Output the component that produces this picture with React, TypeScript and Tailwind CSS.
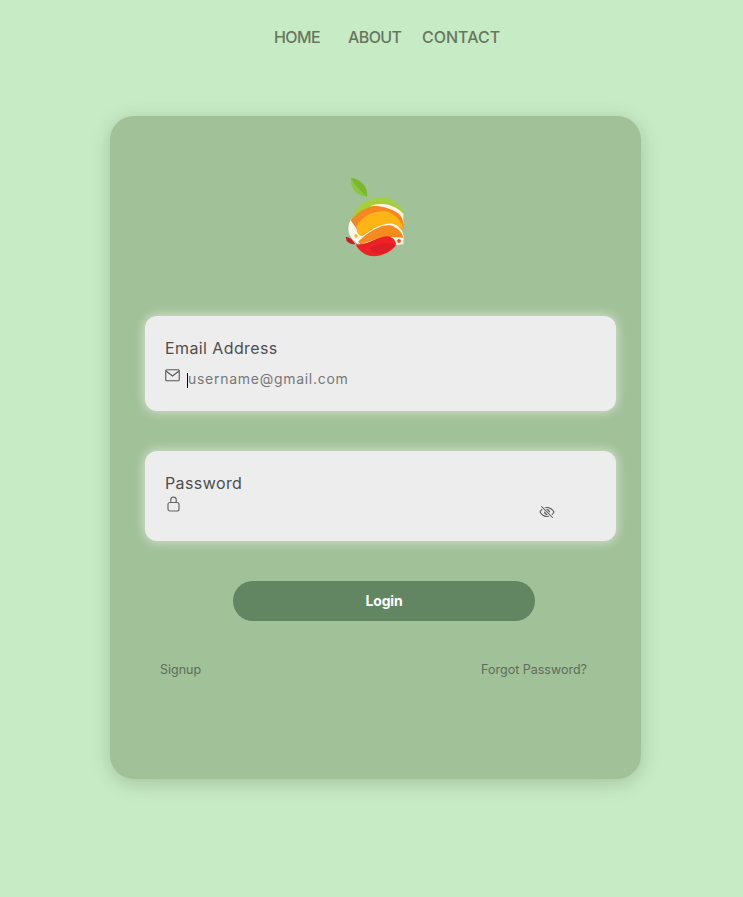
import { IoEyeOffOutline } from "react-icons/io5";

const font = { fontFamily: "Inter, 'Open Sans', sans-serif" };

function Logo() {
  return (
    <svg viewBox="0 0 330 330" className="h-[110px] w-[110px]">
      <path d="M93 50 C125 55 145 80 141 108 C112 104 90 85 93 50 Z" fill="#8cc63f" />
      <path d="M93 50 C125 55 145 80 141 108 C125 90 105 75 93 50 Z" fill="#76b82f" />
      <path d="M97 172 C105 128 160 100 205 112 C225 122 245 140 257 156 L230 150 L150 140 C130 148 110 158 97 172 Z" fill="#a5cf3d" />
      <path d="M92 176 C82 195 82 220 100 238 L112 248 L160 225 L130 170 Z" fill="#fff8ea" />
      <path d="M150 136 C180 122 222 128 250 158 L250 190 L170 150 Z" fill="#fff8ea" />
      <path d="M92 178 C108 158 130 142 160 134 C195 136 225 146 240 162 C250 175 252 190 250 205 L125 225 Z" fill="#f6861f" />
      <path d="M110 196 C125 165 165 146 205 152 C232 165 248 185 250 204 C215 182 170 188 130 222 C118 230 108 215 110 196 Z" fill="#fdb515" />
      <path d="M112 240 C145 208 185 186 218 188 C235 192 248 205 251 225 L250 250 L225 252 L118 250 Z" fill="#fff8ea" />
      <path d="M114 242 C150 208 185 190 212 193 C232 200 247 214 250 230 L215 228 C185 226 150 240 122 250 Z" fill="#f58b1e" />
      <path d="M78 228 C88 226 100 238 106 250 C92 250 76 245 78 228 Z" fill="#c81f2b" />
      <path d="M108 250 C145 254 170 226 205 226 C222 230 232 245 226 256 C205 282 160 296 130 276 C118 268 110 260 108 250 Z" fill="#ec2225" />
      <path d="M150 262 C175 244 205 244 224 252 C205 280 165 290 150 262 Z" fill="#dc1f26" />
      <circle cx="237" cy="240" r="7" fill="#e8541f" stroke="#fff8ea" strokeWidth="2" />
      <circle cx="108" cy="225" r="5" fill="#fdb515" />
    </svg>
  );
}

function MailIcon() {
  return (
    <svg viewBox="0 0 15 13" className="h-[13px] w-[15px]" fill="none" stroke="#555" strokeWidth="1.1">
      <rect x="0.75" y="0.75" width="13.5" height="11" rx="1" />
      <path d="M1 2 L7.5 7 L14 2" />
    </svg>
  );
}

function LockIcon() {
  return (
    <svg viewBox="0 0 13 16" className="h-4 w-[13px]" fill="none" stroke="#666" strokeWidth="1.2">
      <rect x="1" y="6.5" width="11" height="8.5" rx="2" />
      <path d="M3.8 6.5 V3.8 A2.7 2.7 0 0 1 9.2 3.8 V6.5" />
    </svg>
  );
}

export default function App() {
  return (
    <div className="min-h-[897px] bg-[#c7ecc5] pt-[27px]" style={font}>
      <nav className="ml-[274px] flex h-[21px] text-[16px] leading-[21px] font-medium text-[#66775f]">
        <a className="w-[74px] tracking-[-0.6px]">HOME</a>
        <a className="w-[74px] tracking-[-0.6px]">ABOUT</a>
        <a className="tracking-[0px]">CONTACT</a>
      </nav>

      <main className="mt-[68px] ml-[110px] h-[663px] w-[531px] rounded-[24px] bg-[#a1c198] pt-[45px] shadow-[0_4px_20px_rgba(0,0,0,0.18)]">
        <div className="ml-[210px]">
          <Logo />
        </div>

        <div className="mt-[45px] ml-[35px] h-[95px] w-[471px] rounded-[12px] bg-[#ededed] px-5 pt-[20px] shadow-[0_0_12px_rgba(255,255,255,0.65)]">
          <div className="text-[16px] leading-[24px] tracking-[0.4px] text-[#4d4d4d]">Email Address</div>
          <div className="mt-[6px] flex items-start">
            <div className="mt-[3px] w-[22px]">
              <MailIcon />
            </div>
            <span className="mt-[7px] border-l border-black pb-[4px] text-[14px] leading-[11px] tracking-[0.72px] text-[#777]">username@gmail.com</span>
          </div>
        </div>

        <div className="mt-[40px] ml-[35px] h-[90px] w-[471px] rounded-[12px] bg-[#ededed] px-5 pt-[20px] shadow-[0_0_12px_rgba(255,255,255,0.65)]">
          <div className="text-[16px] leading-[24px] tracking-[0.4px] text-[#4d4d4d]">Password</div>
          <div className="flex items-start justify-between pt-px">
            <div className="ml-[2px]">
              <LockIcon />
            </div>
            <IoEyeOffOutline className="mt-[8px] mr-[41px] text-[16px] text-[#555]" />
          </div>
        </div>

        <button className="mt-[40px] ml-[123px] block h-[40px] w-[302px] rounded-full bg-[#618661] pb-[2px] text-[14px] font-bold tracking-[-0.2px] text-white">
          Login
        </button>

        <div className="mt-[40px] ml-[50px] flex w-[427px] justify-between text-[12.5px] leading-[18px] text-[#5f6b5f]">
          <a>Signup</a>
          <a>Forgot Password?</a>
        </div>
      </main>
    </div>
  );
}
